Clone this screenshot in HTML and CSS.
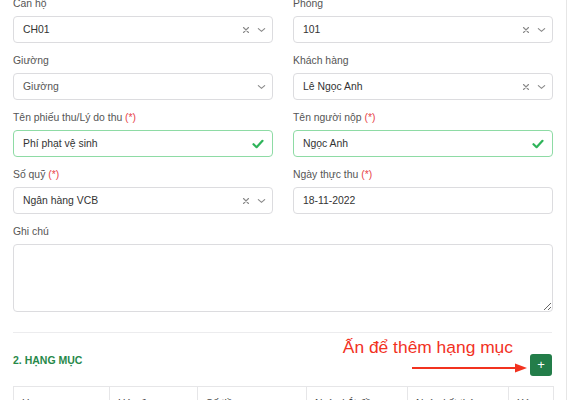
FILE: index.html
```html
<!DOCTYPE html>
<html lang="vi">
<head>
<meta charset="utf-8">
<link rel="stylesheet" href="styles.css">
</head>
<body>
<div class="panel">
  <div class="form">
    <div class="field">
      <label class="lbl">Căn hộ</label>
      <div class="input select">
        <span class="val">CH01</span>
        <span class="icons">
          <svg class="x" viewBox="0 0 8 8" width="8" height="8"><path d="M1.5 1.5 L6.5 6.5 M6.5 1.5 L1.5 6.5"/></svg>
          <svg class="chev" viewBox="0 0 10 6" width="9" height="6"><path d="M1.5 1.5 L5 4.5 L8.5 1.5"/></svg>
        </span>
      </div>
    </div>
    <div class="field">
      <label class="lbl">Phòng</label>
      <div class="input select">
        <span class="val">101</span>
        <span class="icons">
          <svg class="x" viewBox="0 0 8 8" width="8" height="8"><path d="M1.5 1.5 L6.5 6.5 M6.5 1.5 L1.5 6.5"/></svg>
          <svg class="chev" viewBox="0 0 10 6" width="9" height="6"><path d="M1.5 1.5 L5 4.5 L8.5 1.5"/></svg>
        </span>
      </div>
    </div>
    <div class="field">
      <label class="lbl">Giường</label>
      <div class="input select">
        <span class="val placeholder">Giường</span>
        <span class="icons">
          <svg class="chev" viewBox="0 0 10 6" width="9" height="6"><path d="M1.5 1.5 L5 4.5 L8.5 1.5"/></svg>
        </span>
      </div>
    </div>
    <div class="field">
      <label class="lbl">Khách hàng</label>
      <div class="input select">
        <span class="val">Lê Ngọc Anh</span>
        <span class="icons">
          <svg class="x" viewBox="0 0 8 8" width="8" height="8"><path d="M1.5 1.5 L6.5 6.5 M6.5 1.5 L1.5 6.5"/></svg>
          <svg class="chev" viewBox="0 0 10 6" width="9" height="6"><path d="M1.5 1.5 L5 4.5 L8.5 1.5"/></svg>
        </span>
      </div>
    </div>
    <div class="field">
      <label class="lbl">Tên phiếu thu/Lý do thu <span class="req">(*)</span></label>
      <div class="input valid">
        <span class="val">Phí phạt vệ sinh</span>
        <svg class="check" viewBox="0 0 12 10" width="12" height="10"><path d="M1.5 5.2 L4.6 8.2 L10.5 1.8"/></svg>
      </div>
    </div>
    <div class="field">
      <label class="lbl">Tên người nộp <span class="req">(*)</span></label>
      <div class="input valid">
        <span class="val">Ngọc Anh</span>
        <svg class="check" viewBox="0 0 12 10" width="12" height="10"><path d="M1.5 5.2 L4.6 8.2 L10.5 1.8"/></svg>
      </div>
    </div>
    <div class="field">
      <label class="lbl">Số quỹ <span class="req">(*)</span></label>
      <div class="input select">
        <span class="val">Ngân hàng VCB</span>
        <span class="icons">
          <svg class="x" viewBox="0 0 8 8" width="8" height="8"><path d="M1.5 1.5 L6.5 6.5 M6.5 1.5 L1.5 6.5"/></svg>
          <svg class="chev" viewBox="0 0 10 6" width="9" height="6"><path d="M1.5 1.5 L5 4.5 L8.5 1.5"/></svg>
        </span>
      </div>
    </div>
    <div class="field">
      <label class="lbl">Ngày thực thu <span class="req">(*)</span></label>
      <div class="input">
        <span class="val">18-11-2022</span>
      </div>
    </div>
    <div class="field wide">
      <label class="lbl">Ghi chú</label>
      <textarea class="note"></textarea>
    </div>
  </div>

  <div class="divider"></div>

  <div class="section-head">
    <h3 class="section-title">2. HẠNG MỤC</h3>
    <div class="add-wrap">
      <span class="hint">Ấn để thêm hạng mục</span>
      <svg class="arrow" viewBox="0 0 116 12" width="116" height="12"><path class="shaft" d="M0 6 L104 6"/><path class="head" d="M103 1.5 L115 6 L103 10.5 Z"/></svg>
      <button class="add-btn">+</button>
    </div>
  </div>

  <table class="items">
    <thead>
      <tr>
        <th class="c1">Hạng mục</th>
        <th class="c2">Hóa đơn</th>
        <th class="c3">Số tiền</th>
        <th class="c4">Ngày bắt đầu</th>
        <th class="c5">Ngày kết thúc</th>
        <th class="c6">Xóa</th>
      </tr>
    </thead>
  </table>
</div>
</body>
</html>
```

FILE: styles.css
```css
* { box-sizing: border-box; }
html, body { margin: 0; padding: 0; background: #fff; overflow: hidden; }
body {
  font-family: "Liberation Sans", Arial, sans-serif;
  font-size: 10.4px;
  color: #333;
}
.panel {
  width: 567px;
  height: 400px;
  padding: 0 14px 0 13px;
  border-right: 1px solid #e6e6e6;
  overflow: hidden;
}
.form {
  margin-top: -4px;
  display: grid;
  grid-template-columns: 260px 260px;
  column-gap: 20px;
  row-gap: 10px;
}
.field { display: flex; flex-direction: column; }
.field.wide { grid-column: 1 / span 2; }
.lbl {
  display: block;
  line-height: 15px;
  margin-bottom: 5px;
  color: #555;
}
.req { color: #e8454a; }
.input {
  height: 27px;
  border: 1px solid #dcdcdf;
  border-radius: 4px;
  display: flex;
  align-items: center;
  padding: 0 9px;
  background: #fff;
}
.val { flex: 1; color: #333; }
.val.placeholder { color: #555; }
.icons { display: flex; align-items: center; gap: 7px; margin-right: -3px; }
.icons svg { fill: none; stroke: #8a8a8a; stroke-linecap: round; }
.icons .x { stroke-width: 1.1; }
.icons .chev { stroke-width: 1.3; }
.input.valid { border-color: #8edba5; }
.check { fill: none; stroke: #2fb45a; stroke-width: 2.2; stroke-linecap: round; stroke-linejoin: round; margin-right: -1px; }
.note {
  display: block;
  width: 100%;
  height: 68px;
  border: 1px solid #dcdcdf;
  border-radius: 4px;
  resize: vertical;
  font-family: inherit;
  font-size: 10.4px;
}
.divider {
  height: 1px;
  background: #ececee;
  margin-top: 20px;
}
.section-head {
  display: flex;
  justify-content: space-between;
  align-items: flex-end;
  margin-top: 20px;
}
.section-title {
  margin: 0 0 9px 0;
  font-size: 10.5px;
  line-height: 14px;
  font-weight: bold;
  color: #27894a;
}
.add-wrap { position: relative; }
.hint {
  position: absolute;
  right: 39px;
  top: -17px;
  white-space: nowrap;
  font-size: 17.4px;
  line-height: 20px;
  color: #f2321f;
}
.arrow {
  position: absolute;
  right: 24px;
  top: 8px;
}
.arrow .shaft { stroke: #f2321f; stroke-width: 2.2; }
.arrow .head { fill: #f2321f; }
.add-btn {
  display: block;
  width: 22px;
  height: 22px;
  padding: 0;
  border: none;
  border-radius: 3px;
  background: #237d49;
  color: #fff;
  font-family: inherit;
  font-size: 13px;
  line-height: 22px;
  text-align: center;
}
.items {
  margin-top: 10px;
  width: 540px;
  border-collapse: collapse;
  table-layout: fixed;
}
.items th {
  border: 1px solid #e6e6e8;
  text-align: left;
  font-weight: normal;
  color: #444;
  padding: 10px 8px;
  line-height: 14px;
  font-size: 10.4px;
}
.items .c1 { width: 96px; }
.items .c2 { width: 88px; }
.items .c3 { width: 109px; }
.items .c4 { width: 101px; }
.items .c5 { width: 101px; }
.items .c6 { width: 45px; }
```
